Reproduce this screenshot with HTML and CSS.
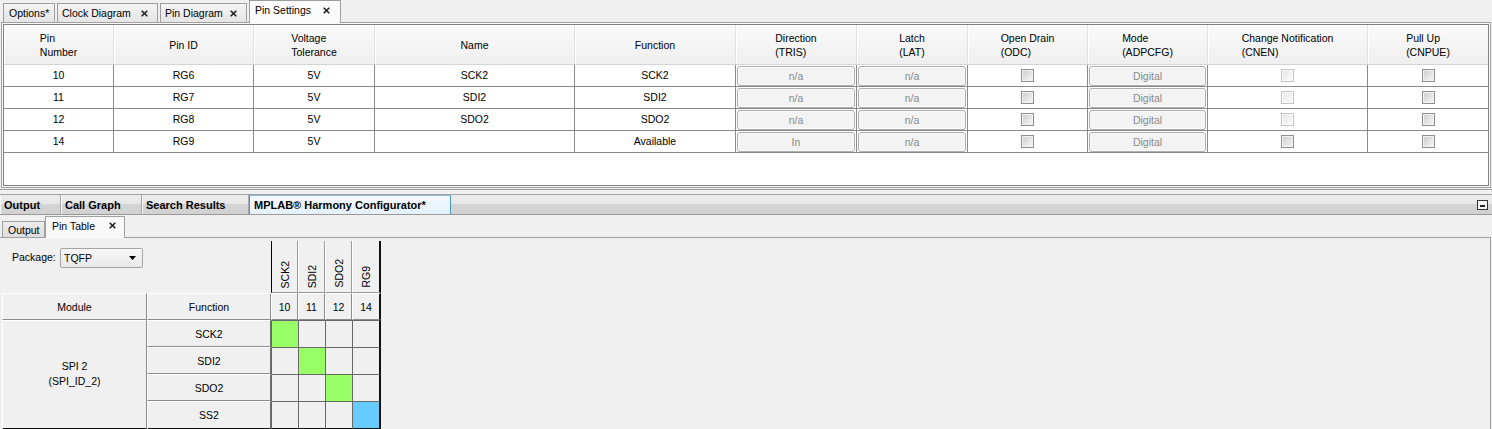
FILE: index.html
```html
<!DOCTYPE html>
<html>
<head>
<meta charset="utf-8">
<link rel="stylesheet" href="styles.css">
</head>
<body>
<div class="doc-tabs">
  <div class="dtab t-opt">Options*</div>
  <div class="dtab t-clock">Clock Diagram <svg class="x" width="7" height="7" viewBox="0 0 7 7"><path d="M0.7 0.7 L6.3 6.3 M6.3 0.7 L0.7 6.3" stroke="#222" stroke-width="1.6"/></svg></div>
  <div class="dtab t-pind">Pin Diagram <svg class="x" width="7" height="7" viewBox="0 0 7 7"><path d="M0.7 0.7 L6.3 6.3 M6.3 0.7 L0.7 6.3" stroke="#222" stroke-width="1.6"/></svg></div>
  <div class="dtab active t-pins">Pin Settings <svg class="x" width="7" height="7" viewBox="0 0 7 7"><path d="M0.7 0.7 L6.3 6.3 M6.3 0.7 L0.7 6.3" stroke="#222" stroke-width="1.6"/></svg></div>
</div>

<div class="frame">
  <div class="tbox">
    <div class="thead cols">
      <div class="th"><span class="lbl">Pin<br>Number</span></div>
      <div class="th"><span class="lbl">Pin ID</span></div>
      <div class="th"><span class="lbl">Voltage<br>Tolerance</span></div>
      <div class="th"><span class="lbl">Name</span></div>
      <div class="th"><span class="lbl">Function</span></div>
      <div class="th"><span class="lbl">Direction<br>(TRIS)</span></div>
      <div class="th"><span class="lbl">Latch<br>(LAT)</span></div>
      <div class="th"><span class="lbl">Open Drain<br>(ODC)</span></div>
      <div class="th"><span class="lbl">Mode<br>(ADPCFG)</span></div>
      <div class="th"><span class="lbl">Change Notification<br>(CNEN)</span></div>
      <div class="th"><span class="lbl">Pull Up<br>(CNPUE)</span></div>
    </div>

    <div class="trow cols">
      <div class="td">10</div><div class="td">RG6</div><div class="td">5V</div><div class="td">SCK2</div><div class="td">SCK2</div>
      <div class="td bt"><div class="btn">n/a</div></div><div class="td bt"><div class="btn">n/a</div></div>
      <div class="td"><div class="cb"></div></div>
      <div class="td bt"><div class="btn">Digital</div></div>
      <div class="td"><div class="cb dis"></div></div>
      <div class="td"><div class="cb"></div></div>
    </div>
    <div class="trow cols">
      <div class="td">11</div><div class="td">RG7</div><div class="td">5V</div><div class="td">SDI2</div><div class="td">SDI2</div>
      <div class="td bt"><div class="btn">n/a</div></div><div class="td bt"><div class="btn">n/a</div></div>
      <div class="td"><div class="cb"></div></div>
      <div class="td bt"><div class="btn">Digital</div></div>
      <div class="td"><div class="cb dis"></div></div>
      <div class="td"><div class="cb"></div></div>
    </div>
    <div class="trow cols">
      <div class="td">12</div><div class="td">RG8</div><div class="td">5V</div><div class="td">SDO2</div><div class="td">SDO2</div>
      <div class="td bt"><div class="btn">n/a</div></div><div class="td bt"><div class="btn">n/a</div></div>
      <div class="td"><div class="cb"></div></div>
      <div class="td bt"><div class="btn">Digital</div></div>
      <div class="td"><div class="cb dis"></div></div>
      <div class="td"><div class="cb"></div></div>
    </div>
    <div class="trow cols">
      <div class="td">14</div><div class="td">RG9</div><div class="td">5V</div><div class="td"></div><div class="td">Available</div>
      <div class="td bt"><div class="btn">In</div></div><div class="td bt"><div class="btn">n/a</div></div>
      <div class="td"><div class="cb"></div></div>
      <div class="td bt"><div class="btn">Digital</div></div>
      <div class="td"><div class="cb"></div></div>
      <div class="td"><div class="cb"></div></div>
    </div>
  </div>
</div>

<div class="splitter"></div>

<div class="bar">
  <div class="btab b1">Output</div>
  <div class="btab b2">Call Graph</div>
  <div class="btab b3">Search Results</div>
  <div class="btab b4 sel">MPLAB® Harmony Configurator*</div>
  <svg class="minbtn" width="11" height="10" viewBox="0 0 11 10"><rect x="0.5" y="0.5" width="10" height="9" fill="#f4f4f4" stroke="#333"/><rect x="3" y="5" width="5" height="2" fill="#222"/></svg>
</div>

<div class="subtabs">
  <div class="stab s-out">Output</div>
  <div class="stab active s-pt">Pin Table <svg class="x" width="7" height="7" viewBox="0 0 7 7"><path d="M0.7 0.7 L6.3 6.3 M6.3 0.7 L0.7 6.3" stroke="#222" stroke-width="1.6"/></svg></div>
</div>

<div class="panel">
  <div class="matrix">
    <div class="pkg">
      <span class="pkg-label">Package:</span>
      <div class="select"><span>TQFP</span><svg width="7" height="4" viewBox="0 0 7 4"><path d="M0 0 H7 L3.5 4 Z" fill="#000"/></svg></div>
    </div>
    <div class="vh first"><span>SCK2</span></div>
    <div class="vh"><span>SDI2</span></div>
    <div class="vh"><span>SDO2</span></div>
    <div class="vh last"><span>RG9</span></div>

    <div class="bev">Module</div>
    <div class="bev">Function</div>
    <div class="bev num">10</div>
    <div class="bev num">11</div>
    <div class="bev num">12</div>
    <div class="bev num last">14</div>

    <div class="bev module"><span>SPI 2<br>(SPI_ID_2)</span></div>

    <div class="bev fn">SCK2</div>
    <div class="dc green"></div><div class="dc"></div><div class="dc"></div><div class="dc last"></div>

    <div class="bev fn">SDI2</div>
    <div class="dc"></div><div class="dc green"></div><div class="dc"></div><div class="dc last"></div>

    <div class="bev fn">SDO2</div>
    <div class="dc"></div><div class="dc"></div><div class="dc green"></div><div class="dc last"></div>

    <div class="bev fn bottom">SS2</div>
    <div class="dc bottom"></div><div class="dc bottom"></div><div class="dc bottom"></div><div class="dc last bottom blue"></div>
  </div>
</div>
</body>
</html>
```

FILE: styles.css
```css
* { box-sizing: border-box; }
html, body { margin: 0; padding: 0; }
body {
  width: 1492px;
  height: 429px;
  overflow: hidden;
  background: #f0f0f0;
  font-family: "Liberation Sans", Arial, sans-serif;
  font-size: 10.5px;
  color: #000;
}

/* ---------- document tabs ---------- */
.doc-tabs {
  height: 22px;
  display: flex;
  align-items: flex-end;
  gap: 2px;
  padding-left: 3px;
}
.dtab {
  height: 19px;
  display: flex;
  align-items: center;
  padding-left: 5px;
  border: 1px solid #9d9d9d;
  border-bottom: none;
  background: linear-gradient(#f4f4f4, #e5e5e5);
  white-space: nowrap;
}
.dtab .x { margin-left: auto; margin-right: 9px; }
.dtab.active {
  height: 23px;
  margin-bottom: -1px;
  position: relative;
  z-index: 1;
  background: #fbfbfb;
  align-items: flex-start;
  padding-top: 3px;
}
.dtab.active .x { margin-top: 3px; margin-right: 10px; }
.t-opt { width: 52px; }
.t-clock { width: 101px; padding-left: 4px; }
.t-pind { width: 87px; padding-left: 4px; }
.t-pins { width: 92px; }

/* ---------- pin settings table ---------- */
.frame {
  margin-left: 1px;
  width: 1490px;
  height: 166px;
  border: 1px solid #a0a0a0;
  padding: 1px;
  background: #fafafa;
}
.tbox {
  height: 100%;
  border: 1px solid #828282;
  background: #fff;
}
.cols {
  display: grid;
  grid-template-columns: 110px 140px 121px 200px 161px 121px 111px 120px 120px 160px 120px;
}
.thead {
  height: 40px;
  border-bottom: 1px solid #d4d4d4;
  background: linear-gradient(#fafafa, #efefef);
}
.th {
  display: flex;
  align-items: center;
  justify-content: center;
  border-right: 1px solid #e1e1e1;
  box-shadow: inset 1px 0 #ffffff;
  line-height: 14px;
}
.th:last-child { border-right: none; }
.th .lbl { text-align: left; }
.trow { height: 22px; }
.td {
  display: flex;
  align-items: center;
  justify-content: center;
  border-right: 1px solid #8a8a8a;
  border-bottom: 1px solid #8a8a8a;
  white-space: nowrap;
  padding-bottom: 1px;
}
.td:last-child { border-right: none; }
.td.bt { align-items: stretch; justify-content: stretch; padding: 1px 1px 0 1px; }
.btn {
  flex: 1;
  display: flex;
  align-items: center;
  justify-content: center;
  border: 1px solid #adadad;
  border-radius: 3px;
  box-shadow: inset 0 0 0 1px #fbfbfb;
  background: #f3f3f3;
  color: #8a8a8a;
}
.cb {
  width: 13px;
  height: 13px;
  border: 1px solid #8e8f8f;
  box-shadow: inset 0 0 0 1px #f2f2f2;
  background: linear-gradient(135deg, #cbcbcb, #f8f8f8);
}
.cb.dis {
  border-color: #c4c4c4;
  box-shadow: inset 0 0 0 1px #fafafa;
  background: linear-gradient(135deg, #e6e6e6, #fbfbfb);
}

/* ---------- splitter ---------- */
.splitter {
  height: 5px;
  margin-top: 1px;
  border-top: 1px solid #a0a0a0;
}

/* ---------- output window tab bar ---------- */
.bar {
  height: 21px;
  display: flex;
  border-top: 1px solid #a0a0a0;
  border-bottom: 1px solid #9a9a9a;
  background: linear-gradient(#ececec 0%, #e6e6e6 50%, #d4d4d4 50%, #d1d1d1 100%);
  font-weight: bold;
  font-size: 11px;
  white-space: nowrap;
}
.btab {
  display: flex;
  align-items: center;
  padding-left: 4px;
  border-right: 1px solid #a8a8a8;
  box-shadow: inset 1px 0 #f8f8f8;
}
.b1 { width: 61px; }
.b2 { width: 81px; }
.b3 { width: 107px; }
.b4 { width: 202px; }
.btab.sel {
  background: linear-gradient(#f3f9fd, #e4f1fb);
  border: 1px solid #4e90c8;
  border-bottom: none;
  border-top-color: #8fb8dc;
  box-shadow: none;
  padding-left: 4px;
}
.minbtn { margin-left: auto; margin-right: 4px; align-self: center; }

/* ---------- sub tabs ---------- */
.subtabs {
  height: 22px;
  display: flex;
  align-items: flex-end;
  padding-left: 2px;
}
.stab {
  display: flex;
  align-items: center;
  border: 1px solid #a0a0a0;
  border-bottom: none;
  white-space: nowrap;
}
.s-out {
  width: 43px;
  height: 16px;
  padding-left: 5px;
  background: linear-gradient(#ececec, #dedede);
}
.s-pt {
  width: 80px;
  height: 22px;
  padding-left: 6px;
  padding-bottom: 4px;
  background: #f9f9f9;
}
.stab.active { margin-bottom: -1px; position: relative; z-index: 1; }
.s-pt .x { margin-left: auto; margin-right: 8px; }

/* ---------- pin table panel ---------- */
.panel {
  width: 1491px;
  height: 193px;
  border-top: 1px solid #a0a0a0;
  border-right: 1px solid #a0a0a0;
  padding: 3px 0 0 2px;
}
.matrix {
  display: grid;
  grid-template-columns: 145px 124px 27px 27px 27px 29px;
  grid-template-rows: 52px 27px 27px 27px 27px 29px;
}
.pkg {
  grid-column: 1 / span 2;
  display: flex;
  align-items: flex-start;
  padding: 7px 0 0 10px;
}
.pkg-label { margin-top: 3px; width: 48px; }
.select {
  width: 83px;
  height: 20px;
  display: flex;
  align-items: center;
  justify-content: space-between;
  padding: 0 6px 0 3px;
  border: 1px solid #a3a3a3;
  border-radius: 2px;
  background: linear-gradient(#f8f8f8, #e8e8e8);
}
.vh {
  display: flex;
  justify-content: center;
  align-items: flex-end;
  padding-bottom: 4px;
  border-left: 1px solid #ffffff;
  border-right: 1px solid #9a9a9a;
  border-bottom: 1px solid #9a9a9a;
}
.vh span {
  writing-mode: vertical-rl;
  transform: rotate(180deg);
  line-height: 12px;
}
.vh.first { border-left: 1px solid #000; }
.vh.last { border-right: 2px solid #111; }

.bev {
  display: flex;
  align-items: center;
  justify-content: center;
  background: #f0f0f0;
  border-top: 1px solid #ffffff;
  border-left: 1px solid #ffffff;
  border-right: 1px solid #8c8c8c;
  border-bottom: 1px solid #8c8c8c;
}
.bev.num.last { border-right: 2px solid #111; }
.bev.module {
  grid-column: 1;
  grid-row: 3 / span 4;
  text-align: center;
  line-height: 15px;
  border-bottom: 2px solid #111;
  padding-bottom: 1px;
}
.bev.fn { grid-column: 2; border-right-color: #6a6a6a; }
.bev.bottom { border-bottom: 2px solid #111; }

.dc {
  background: #f0f0f0;
  border-top: 1px solid #696969;
  border-left: 1px solid #696969;
}
.dc.last { border-right: 2px solid #111; }
.dc.bottom { border-bottom: 2px solid #111; }
.dc.green { background: #99ff66; }
.dc.blue { background: #66ccff; }
```
